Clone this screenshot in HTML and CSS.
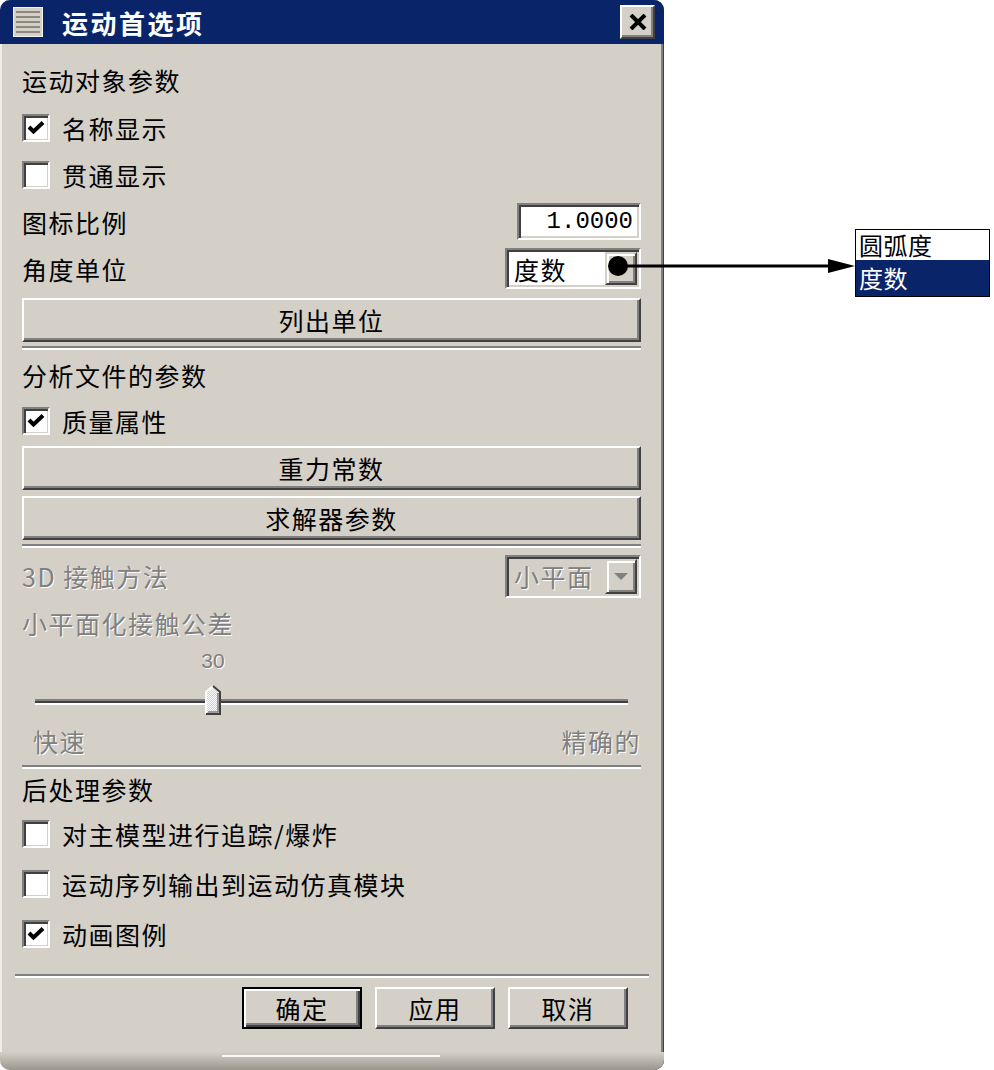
FILE: index.html
```html
<!DOCTYPE html>
<html lang="zh-CN">
<head>
  <meta charset="UTF-8" />
  <title>运动首选项</title>
  <link rel="stylesheet" href="styles.css">
</head>
<body>
  <div class="page">
    <div class="dialog">
      <div class="titlebar">
        <svg class="app-icon" width="30" height="30" viewBox="0 0 30 30">
          <rect x="0" y="0" width="30" height="30" fill="#d4d0c8"/>
          <rect x="0.5" y="0.5" width="29" height="29" fill="none" stroke="#f4f2ee"/>
          <g stroke="#8c8880" stroke-width="2">
            <line x1="3" y1="5" x2="27" y2="5"/>
            <line x1="3" y1="10" x2="27" y2="10"/>
            <line x1="3" y1="15" x2="27" y2="15"/>
            <line x1="3" y1="20" x2="27" y2="20"/>
            <line x1="3" y1="25" x2="27" y2="25"/>
          </g>
        </svg>
        <span class="title">运动首选项</span>
        <button class="close-btn">
          <svg width="18" height="16" viewBox="0 0 18 16">
            <path d="M2 1 L16 15 M16 1 L2 15" stroke="#000" stroke-width="4"/>
          </svg>
        </button>
      </div>

      <div class="panel">
        <div class="row section">运动对象参数</div>
        <label class="row check">
          <span class="box"><svg width="18" height="16" viewBox="0 0 18 16"><path d="M2 7 L6.5 11.5 L16 2.5" fill="none" stroke="#000" stroke-width="4"/></svg></span>
          名称显示
        </label>
        <label class="row check"><span class="box"></span>贯通显示</label>
        <div class="row field">
          <span>图标比例</span>
          <span class="textbox sunken">1.0000</span>
        </div>
        <div class="row field">
          <span>角度单位</span>
          <span class="combo sunken">
            <span class="combo-text">度数</span>
            <span class="combo-btn"><span class="tri"></span></span>
          </span>
        </div>
        <button class="wide-btn raised">列出单位</button>
        <div class="sep"></div>

        <div class="row section sec-2">分析文件的参数</div>
        <label class="row check check-2">
          <span class="box"><svg width="18" height="16" viewBox="0 0 18 16"><path d="M2 7 L6.5 11.5 L16 2.5" fill="none" stroke="#000" stroke-width="4"/></svg></span>
          质量属性
        </label>
        <button class="wide-btn raised btn-first">重力常数</button>
        <button class="wide-btn raised">求解器参数</button>
        <div class="sep sep-2"></div>

        <div class="row field disabled contact">
          <span>3D 接触方法</span>
          <span class="combo sunken combo-off">
            <span class="combo-text">小平面</span>
            <span class="combo-btn"><span class="tri"></span></span>
          </span>
        </div>
        <div class="row section disabled">小平面化接触公差</div>
        <div class="slider-value disabled"><span style="left: 30%">30</span></div>
        <div class="slider">
          <div class="track"></div>
          <svg class="thumb" style="left: calc(30% - 8px)" width="16" height="30" viewBox="0 0 16 30">
            <defs>
              <pattern id="dots" width="2" height="2" patternUnits="userSpaceOnUse">
                <rect width="2" height="2" fill="#d4d0c8"/>
                <rect width="1" height="1" fill="#ffffff"/>
                <rect x="1" y="1" width="1" height="1" fill="#ffffff"/>
              </pattern>
            </defs>
            <path d="M1 7 L8 1 L15 7 V29 H1 Z" fill="url(#dots)"/>
            <path d="M1 29 V7 L8 1" fill="none" stroke="#fff" stroke-width="2"/>
            <path d="M8 1 L15 7 V29 H1" fill="none" stroke="#404040" stroke-width="2"/>
            <path d="M13 8 V27 H3" fill="none" stroke="#808080" stroke-width="1.5"/>
          </svg>
        </div>
        <div class="row scale disabled">
          <span>快速</span>
          <span>精确的</span>
        </div>
        <div class="sep sep-3"></div>

        <div class="row section sec-3">后处理参数</div>
        <label class="row check check-3"><span class="box"></span>对主模型进行追踪/爆炸</label>
        <label class="row check check-3"><span class="box"></span>运动序列输出到运动仿真模块</label>
        <label class="row check check-3">
          <span class="box"><svg width="18" height="16" viewBox="0 0 18 16"><path d="M2 7 L6.5 11.5 L16 2.5" fill="none" stroke="#000" stroke-width="4"/></svg></span>
          动画图例
        </label>
        <div class="sep sep-4"></div>

        <div class="actions">
          <button class="btn default">确定</button>
          <button class="btn raised">应用</button>
          <button class="btn raised">取消</button>
        </div>
      </div>

      <div class="footer">
        <div class="grip"></div>
      </div>
    </div>

    <!-- callout: unit dropdown -->
    <svg class="callout" width="994" height="1070">
      <circle cx="618" cy="266" r="10" fill="#000"/>
      <line x1="618" y1="266" x2="832" y2="266" stroke="#000" stroke-width="3"/>
      <polygon points="828,259 855,266 828,273" fill="#000"/>
    </svg>
    <ul class="droplist">
      <li>圆弧度</li>
      <li class="selected">度数</li>
    </ul>
  </div>
</body>
</html>
```

FILE: styles.css
```css
html, body {
  margin: 0;
  padding: 0;
  background: #ffffff;
  font-family: "Noto Sans CJK SC", "Liberation Sans", sans-serif;
  font-size: 25px;
  letter-spacing: 1.5px;
  color: #000;
}

.page {
  position: relative;
  width: 994px;
  height: 1070px;
}

.dialog {
  width: 664px;
  height: 1070px;
  display: flex;
  flex-direction: column;
  background: #d4d0c8;
  border-radius: 10px 10px 10px 10px;
  overflow: hidden;
  box-shadow: inset -1px 0 #404040, inset -3px 0 #808080, inset 2px 0 #f0eee8;
}

/* title bar */
.titlebar {
  height: 44px;
  flex: none;
  display: flex;
  align-items: center;
  padding: 0 9px 0 13px;
  background: #0a246a;
  box-sizing: border-box;
}

.app-icon {
  flex: none;
}

.title {
  margin-left: 19px;
  color: #fff;
  font-weight: bold;
  font-size: 26px;
  letter-spacing: 2.5px;
}

.close-btn {
  margin-left: auto;
  width: 35px;
  height: 34px;
  padding: 0;
  display: flex;
  align-items: center;
  justify-content: center;
  background: #d4d0c8;
  border: 2px solid;
  border-color: #fff #404040 #404040 #fff;
  box-shadow: inset -2px -2px #808080;
}

/* body */
.panel {
  display: flex;
  flex-direction: column;
  padding: 12px 23px 0 22px;
}

.row {
  display: flex;
  align-items: center;
  justify-content: space-between;
}

.section { height: 48px; }
.sec-2 { height: 46px; }
.sec-3 { height: 40px; }

.check {
  height: 47px;
  justify-content: flex-start;
}
.check-2 { height: 46px; }
.check-3 { height: 50px; }

.box {
  width: 28px;
  height: 28px;
  margin-right: 12px;
  box-sizing: border-box;
  display: flex;
  align-items: center;
  justify-content: center;
  background: #fff;
  border: 2px solid;
  border-color: #808080 #fff #fff #808080;
  box-shadow: inset 2px 2px #404040, inset -1px -1px #d4d0c8;
}

.field { height: 47px; }
.contact { height: 46px; }

.sunken {
  box-sizing: border-box;
  border: 2px solid;
  border-color: #808080 #fff #fff #808080;
  box-shadow: inset 2px 2px #404040, inset -2px -2px #d4d0c8;
}

.textbox {
  width: 124px;
  height: 37px;
  background: #fff;
  display: flex;
  align-items: center;
  justify-content: flex-end;
  padding-right: 6px;
  font-family: "Liberation Mono", monospace;
  font-size: 24px;
  letter-spacing: 0;
}

.combo {
  width: 136px;
  height: 41px;
  display: flex;
  align-items: stretch;
  background: #fff;
  padding: 2px;
}

.combo-text {
  flex: 1;
  display: flex;
  align-items: center;
  padding-left: 5px;
}

.combo-btn {
  width: 32px;
  box-sizing: border-box;
  display: flex;
  align-items: center;
  justify-content: center;
  background: #d4d0c8;
  border: 2px solid;
  border-color: #d4d0c8 #404040 #404040 #d4d0c8;
  box-shadow: inset 2px 2px #fff, inset -2px -2px #808080;
}

.tri {
  width: 0;
  height: 0;
  border-left: 7px solid transparent;
  border-right: 7px solid transparent;
  border-top: 7px solid #000;
}

.combo-off {
  height: 43px;
  background: #d4d0c8;
}

.combo-off .tri {
  border-top-color: #808080;
}

.raised {
  background: #d4d0c8;
  border: 2px solid;
  border-color: #fff #404040 #404040 #fff;
  box-shadow: inset -2px -2px #808080;
}

.wide-btn {
  height: 44px;
  margin-top: 6px;
  padding: 0;
  font-family: inherit;
  font-size: 25px;
  letter-spacing: 1.5px;
  color: #000;
}

.btn-first { margin-top: 2px; }

.sep {
  height: 0;
  border-top: 2px solid #808080;
  border-bottom: 2px solid #fff;
  margin: 4px 0 2px;
}
.sep-2 { margin: 4px 0 5px; }
.sep-3 { margin: 2px 0 0; }
.sep-4 { margin: 15px -8px 9px -7px; }

.disabled {
  color: #808080;
  text-shadow: 1px 1px 0 #fff;
}

.disabled .combo-text {
  color: #808080;
}

/* slider */
.slider-value {
  position: relative;
  height: 28px;
  margin: 0 13px;
  font-family: "Liberation Sans", sans-serif;
  font-size: 21px;
  letter-spacing: 0;
}

.slider-value span {
  position: absolute;
  top: 2px;
  transform: translateX(-50%);
}

.slider {
  position: relative;
  height: 44px;
  margin: 0 13px;
}

.track {
  position: relative;
  top: 24px;
  height: 2px;
  border-top: 2px solid #808080;
  border-bottom: 2px solid #fff;
  background: #404040;
}

.thumb {
  position: absolute;
  top: 10px;
}

.scale {
  height: 44px;
  padding-left: 11px;
}

/* dialog buttons */
.actions {
  display: flex;
  justify-content: flex-end;
  gap: 13px;
  padding-right: 13px;
}

.btn {
  width: 120px;
  height: 42px;
  padding: 0;
  font-family: inherit;
  font-size: 25px;
  letter-spacing: 1.5px;
  color: #000;
}

.btn.default {
  background: #d4d0c8;
  border: 2px solid #000;
  box-shadow: inset 2px 2px #fff, inset -2px -2px #404040, inset -4px -4px #808080;
}

.footer {
  margin-top: auto;
  height: 18px;
  background: linear-gradient(#d4d0c8, #9a968e);
}

.grip {
  margin: 3px 0 0 222px;
  width: 218px;
  height: 2px;
  background: #fbfaf7;
}

/* callout */
.callout {
  position: absolute;
  left: 0;
  top: 0;
  pointer-events: none;
}

.droplist {
  position: absolute;
  left: 855px;
  top: 229px;
  width: 135px;
  margin: 0;
  padding: 0;
  list-style: none;
  border: 1px solid #000;
  box-sizing: border-box;
  background: #fff;
  font-size: 24px;
  letter-spacing: 0.5px;
}

.droplist li {
  height: 30px;
  line-height: 30px;
  padding-left: 3px;
}

.droplist .selected {
  height: 36px;
  line-height: 36px;
  background: #0a246a;
  color: #fff;
}
```
